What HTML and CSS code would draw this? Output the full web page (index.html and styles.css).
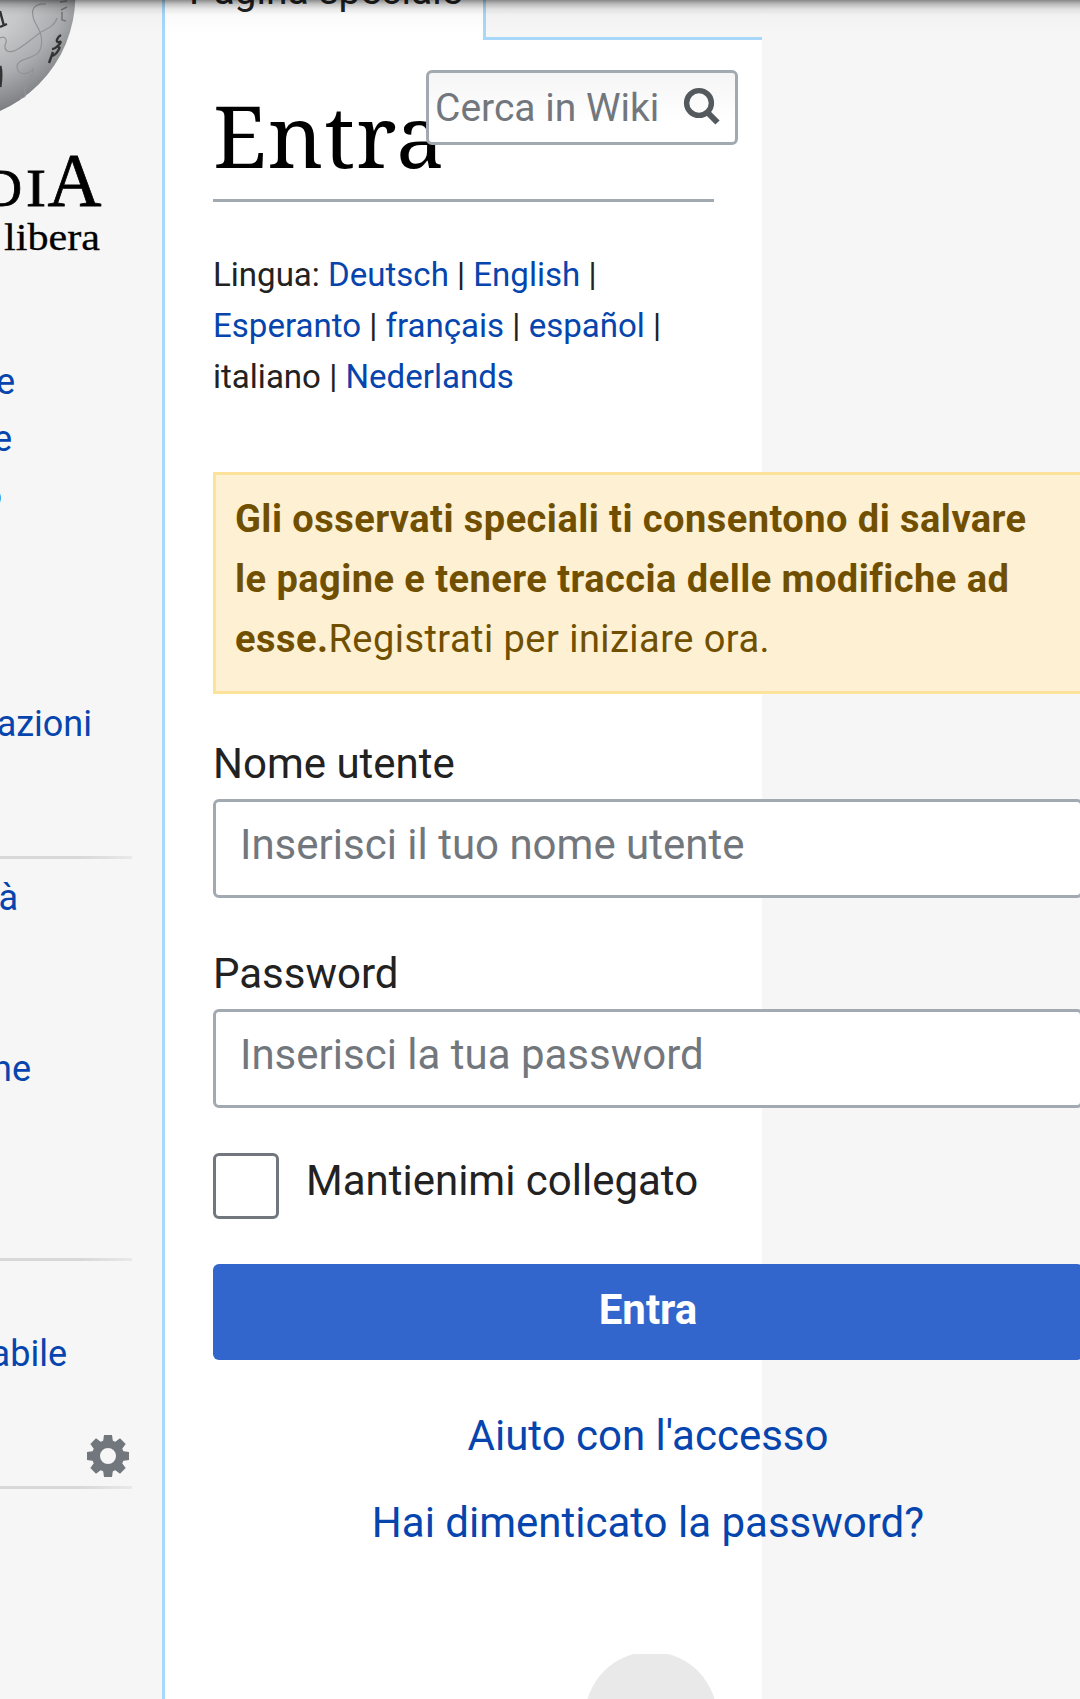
FILE: index.html
```html
<!DOCTYPE html>
<html lang="it">
<head>
<meta charset="utf-8">
<title>Entra</title>
<link rel="stylesheet" href="styles.css">
</head>
<body>
<div class="page">
  <aside class="sidebar">
    <svg class="logo" width="162" height="262" viewBox="0 0 162 262">
      <defs>
        <radialGradient id="ball" gradientUnits="userSpaceOnUse" cx="-40" cy="-30" r="150">
          <stop offset="0" stop-color="#e4e4e6"/>
          <stop offset=".5" stop-color="#c9cacc"/>
          <stop offset=".75" stop-color="#acadb0"/>
          <stop offset="1" stop-color="#77787b"/>
        </radialGradient>
      </defs>
      <circle cx="-50" cy="-4" r="125.3" fill="url(#ball)"/>
      <g fill="none" stroke="#929396" stroke-width="1.2">
        <path d="M46 4C36 3 31 8 33 16C34 24 40 28 41 36C43 46 40 54 33 56C26 60 17 60 17 67C18 76 28 75 33 69C34 78 22 84 25 92C27 97 23 98 20 98"/>
        <path d="M0 38C5 35 8 40 5 45C4 53 12 53 18 49C26 44 33 38 41 32C49 28 55 25 57 18"/>
      </g>
      <g fill="none" stroke="#333" stroke-width="2.4">
        <path d="M0 11L4 26M0 27L7 24"/>
        <path d="M61 35C57 37 55 43 59 42C64 40 56 49 52 49M58 48C62 44 57 56 51 56M53 52L49 63"/>
        <path d="M0 66C2 73 1 80 0 87" stroke-width="3"/>
        <path d="M60 2L67 1M61 10L67 7M62 12V20L66 21" stroke-width="1.5" stroke="#777"/>
      </g>
      <g class="wordmark">
        <text x="-16" y="206" font-size="53" textLength="38" lengthAdjust="spacingAndGlyphs">D</text>
        <text x="26" y="206" font-size="53" textLength="20" lengthAdjust="spacingAndGlyphs">I</text>
        <text x="47.5" y="206" font-size="76" textLength="54" lengthAdjust="spacingAndGlyphs">A</text>
        <text class="motto" x="4" y="250" font-size="38" textLength="96" lengthAdjust="spacingAndGlyphs">libera</text>
      </g>
    </svg>
    <ul class="links links-main">
      <li><a class="w14">e</a></li>
      <li><a class="w12">e</a></li>
      <li><a class="w2">o</a></li>
      <li></li><li></li><li></li>
      <li><a class="w93">azioni</a></li>
    </ul>
    <ul class="links links-community">
      <li><a class="w18">à</a></li>
      <li></li><li></li>
      <li><a class="w31">ne</a></li>
    </ul>
    <ul class="links links-tools">
      <li></li>
      <li><a class="w68">abile</a></li>
    </ul>
    <div class="settings">
      <svg width="42" height="42" viewBox="-21 -21 42 42" fill="#72777d">
        <defs><path id="tooth" d="M-5-14L-4-21H4L5-14Z"/></defs>
        <use href="#tooth"/><use href="#tooth" transform="rotate(45)"/><use href="#tooth" transform="rotate(90)"/><use href="#tooth" transform="rotate(135)"/><use href="#tooth" transform="rotate(180)"/><use href="#tooth" transform="rotate(225)"/><use href="#tooth" transform="rotate(270)"/><use href="#tooth" transform="rotate(315)"/>
        <circle r="12" fill="none" stroke="#72777d" stroke-width="8"/>
      </svg>
    </div>
  </aside>
  <main class="content">
    <div class="tabs">
      <div class="tab"><span>Pagina speciale</span></div>
      <div class="tab-rest"></div>
    </div>
    <div class="search">
      <span class="search-text">Cerca in Wiki</span>
      <svg width="38" height="39" viewBox="0 0 38 39" fill="none" stroke="#54595d">
        <circle cx="16" cy="16" r="12.4" stroke-width="5.4"/>
        <path d="M24 25L34.5 35.5" stroke-width="6"/>
      </svg>
    </div>
    <h1 class="title">Entra</h1>
    <p class="languages">Lingua: <a>Deutsch</a> | <a>English</a> | <br><a>Esperanto</a> | <a>français</a> | <a>español</a> | <br>italiano | <a>Nederlands</a></p>
    <form class="login">
      <div class="notice"><b>Gli osservati speciali ti consentono di salvare<br>le pagine e tenere traccia delle modifiche ad<br>esse.</b>Registrati per iniziare ora.</div>
      <label class="label" for="user">Nome utente</label>
      <input class="field" id="user" type="text" placeholder="Inserisci il tuo nome utente">
      <label class="label" for="pass">Password</label>
      <input class="field" id="pass" type="password" placeholder="Inserisci la tua password">
      <label class="remember"><span class="box"></span><span class="remember-text">Mantienimi collegato</span></label>
      <button class="submit" type="button">Entra</button>
      <a class="help">Aiuto con l'accesso</a>
      <a class="help">Hai dimenticato la password?</a>
      <svg class="badge" width="140" height="45" viewBox="-70 0 140 45"><circle cx="0" cy="64" r="66.3" fill="#e9e9e9"/></svg>
    </form>
  </main>
  <div class="top-shadow"></div>
</div>
</body>
</html>
```
FILE: styles.css
```css
* { box-sizing: border-box; }
body { margin: 0; background: #f6f6f6; font-family: Roboto, sans-serif; color: #222; }
a { color: #0645ad; }

.page { position: relative; display: grid; grid-template-columns: 162px 600px; width: 1080px; height: 1699px; overflow: hidden; }

.sidebar { overflow: hidden; }
.logo { display: block; }
.wordmark { font-family: "Liberation Serif", serif; fill: #000; stroke: #000; stroke-width: .8px; }
.motto { stroke-width: .3px; }
.links { list-style: none; margin: 0; padding: 0; width: 132px; font-size: 36px; line-height: 57px; }
.links li { height: 57px; }
.links a { display: flex; justify-content: flex-end; }
.links-main { margin-top: 92px; }
.links-community, .links-tools { border-top: 3px solid; border-image: linear-gradient(to right, #d8d8d8 60%, #e9e9e9) 1; }
.links-main { padding-bottom: 103px; }
.links-community { padding-top: 11px; padding-bottom: 160px; }
.links-tools { padding-top: 8px; }
.w2 { width: 2px; }
.w12 { width: 12px; }
.w14 { width: 15px; }
.w18 { width: 18px; }
.w31 { width: 31px; }
.w68 { width: 67px; }
.w93 { width: 92px; }
.settings { display: flex; justify-content: flex-end; width: 132px; height: 106px; padding: 52px 3px 0 0; border-bottom: 3px solid; border-image: linear-gradient(to right, #d8d8d8 60%, #e9e9e9) 1; }

.content { position: relative; background: #fff; border-left: 3px solid #a7d7f9; }
.tabs { display: flex; height: 40px; }
.tab { flex: none; width: 321px; height: 40px; border-right: 3px solid #a7d7f9; }
.tab span { display: block; margin: -30px 0 0 24px; font-size: 39px; line-height: 42px; white-space: nowrap; }
.tab-rest { flex: 1; background: #f6f6f6; border-bottom: 3px solid #a7d7f9; }

.search { position: absolute; left: 261px; top: 70px; width: 312px; height: 75px; display: flex; justify-content: space-between; padding: 14px 14px 0 6px; border: 3px solid #a2a9b1; border-radius: 6px; background: linear-gradient(#f5f5f5, #fff 72%); z-index: 1; }
.search-text { margin-top: -2px; font-size: 39px; line-height: 46px; color: #72777d; white-space: nowrap; }

.title { margin: 0 48px; height: 162px; border-bottom: 3px solid #a2a9b1; font: 86px/100px "Noto Serif", serif; letter-spacing: 1.2px; color: #000; padding-top: 45px; }

.languages { margin: 47px 0 70px 48px; font-size: 33.05px; line-height: 51px; white-space: nowrap; }

.login { display: flex; flex-direction: column; width: 870px; margin-left: 48px; }
.notice { height: 222px; padding: 14px 19px; border: 3px solid #fde29b; background: #fef0d2; color: #705000; font-size: 38px; line-height: 60px; letter-spacing: .46px; white-space: nowrap; }
.label { margin-top: 40px; height: 65px; font-size: 42px; line-height: 60px; }
.field { height: 99px; padding: 0 24px 9px; border: 3px solid #a2a9b1; border-radius: 6px; background: #fff; font: 42px Roboto, sans-serif; }
.field + .label { margin-top: 46px; }
.field::placeholder { color: #72777d; opacity: 1; }
.remember { display: flex; gap: 27px; height: 66px; margin-top: 45px; font-size: 42px; line-height: 55px; }
.box { width: 66px; height: 66px; border: 3px solid #72777d; border-radius: 6px; background: #fff; }
.submit { height: 96px; margin-top: 45px; padding: 0 0 5px; border: 0; border-radius: 6px; background: #36c; color: #fff; font: 700 42px Roboto, sans-serif; }
.help { margin-top: 46px; height: 60px; font-size: 42px; line-height: 60px; text-align: center; }
.help + .help { margin-top: 27px; }
.badge { display: block; margin: 101px 0 0 368px; }

.top-shadow { position: absolute; left: 0; top: 0; width: 100%; height: 32px; z-index: 2; background: linear-gradient(rgba(0,0,0,.45), rgba(0,0,0,.24) 4px, rgba(0,0,0,.09) 9px, rgba(0,0,0,.02) 15px, transparent); }
```
